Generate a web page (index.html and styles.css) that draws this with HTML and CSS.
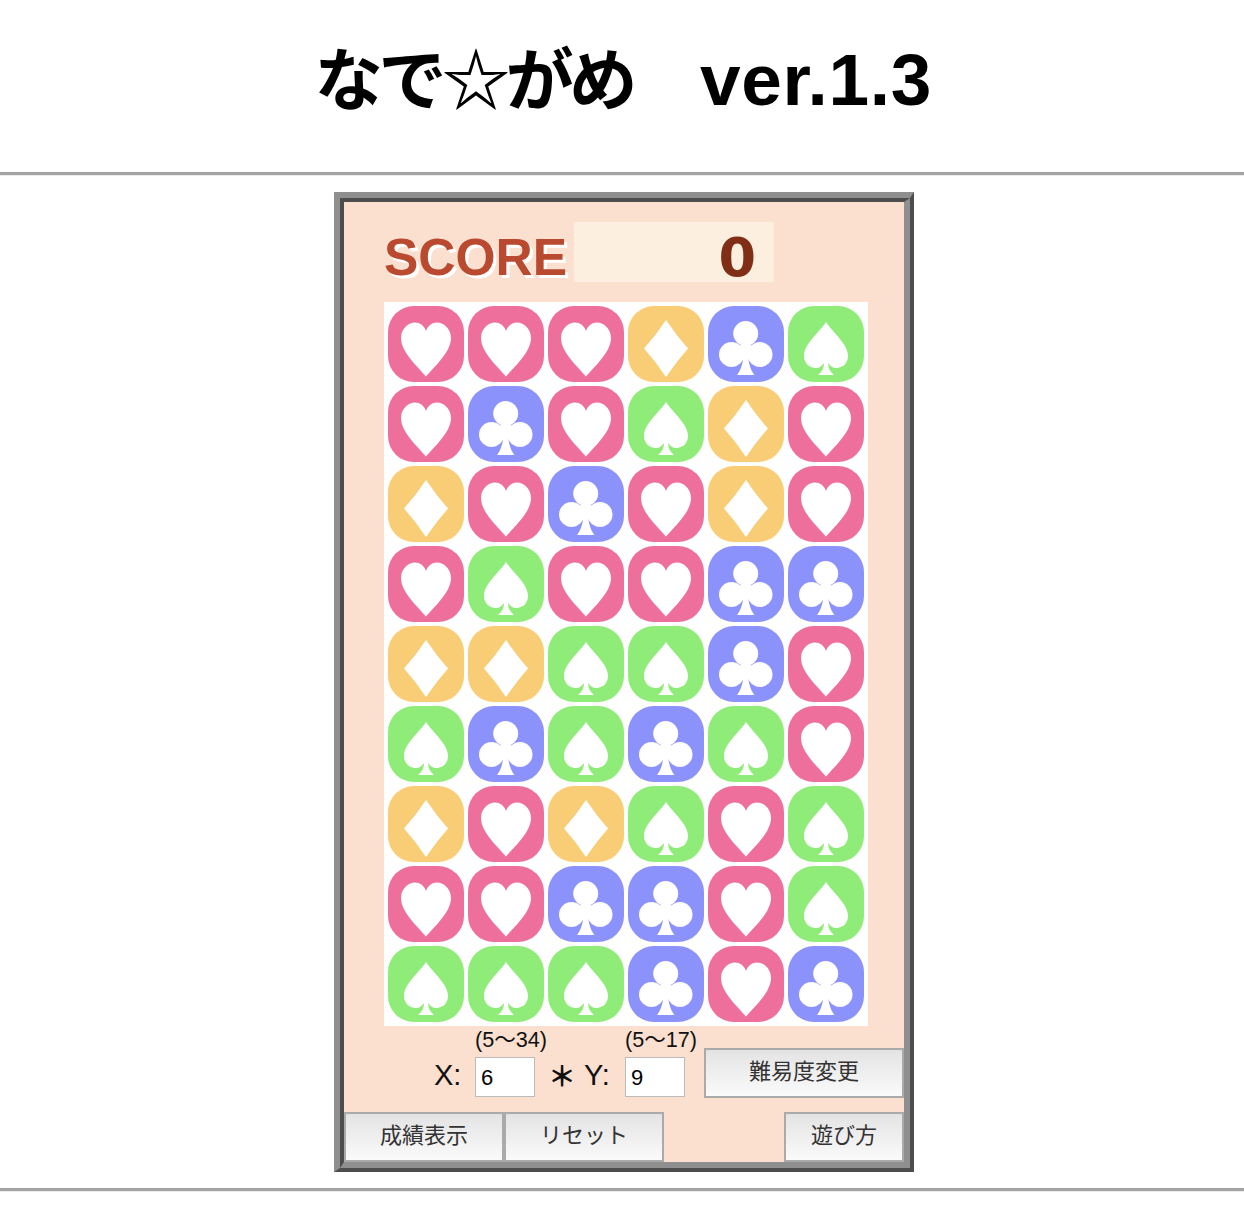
FILE: index.html
```html
<!DOCTYPE html>
<html lang="ja">
<head>
    <meta charset="utf-8"/>
    <title>なで☆がめ</title>
    <link rel="stylesheet" href="styles.css">
</head>

<body>
<svg class="defs" width="0" height="0">
    <symbol id="heart" viewBox="0 0 76 76">
        <path d="M38 70.500C29 60 13 46 13 32C13 23 20 16.500 27 16.500C32 16.500 36 19.500 38 25C40 19.500 44 16.500 49 16.500C56 16.500 63 23 63 32C63 46 47 60 38 70.500Z"/>
    </symbol>
    <symbol id="diamond" viewBox="0 0 76 76">
        <path d="M38 14Q48 29 60 42.500Q48 56 38 71Q28 56 16 42.500Q28 29 38 14Z"/>
    </symbol>
    <symbol id="club" viewBox="0 0 76 76">
        <circle cx="37.700" cy="27.500" r="12.500"/>
        <circle cx="23.500" cy="48.500" r="12.500"/>
        <circle cx="52" cy="48.500" r="12.500"/>
        <path d="M37.700 32L29 44L33 52H42.500L46.500 44Z"/>
        <path d="M35.500 44H40C40 54 41.500 63 46.500 69H29C34 63 35.500 54 35.500 44Z"/>
    </symbol>
    <symbol id="spade" viewBox="0 0 76 76">
        <path d="M38 16C29 29 16 38 16 50C16 57 21 62 28 62C31 62 34 60 36 57C36 62 34 66 30 69H46C42 66 40 62 40 57C42 60 45 62 48 62C55 62 60 57 60 50C60 38 47 29 38 16Z"/>
    </symbol>
</svg>

<h1 class="title"><span class="title_jp">なで☆がめ</span><span class="title_gap">　</span>ver.1.3</h1>
<hr class="rule"/>

<div class="game">
    <div class="game_inner">
        <div class="score">
            <div class="score_label">SCORE</div>
            <div class="score_value">0</div>
        </div>

        <div class="board">
            <div class="tile pink"><svg><use href="#heart"/></svg></div>
            <div class="tile pink"><svg><use href="#heart"/></svg></div>
            <div class="tile pink"><svg><use href="#heart"/></svg></div>
            <div class="tile orange"><svg><use href="#diamond"/></svg></div>
            <div class="tile blue"><svg><use href="#club"/></svg></div>
            <div class="tile green"><svg><use href="#spade"/></svg></div>

            <div class="tile pink"><svg><use href="#heart"/></svg></div>
            <div class="tile blue"><svg><use href="#club"/></svg></div>
            <div class="tile pink"><svg><use href="#heart"/></svg></div>
            <div class="tile green"><svg><use href="#spade"/></svg></div>
            <div class="tile orange"><svg><use href="#diamond"/></svg></div>
            <div class="tile pink"><svg><use href="#heart"/></svg></div>

            <div class="tile orange"><svg><use href="#diamond"/></svg></div>
            <div class="tile pink"><svg><use href="#heart"/></svg></div>
            <div class="tile blue"><svg><use href="#club"/></svg></div>
            <div class="tile pink"><svg><use href="#heart"/></svg></div>
            <div class="tile orange"><svg><use href="#diamond"/></svg></div>
            <div class="tile pink"><svg><use href="#heart"/></svg></div>

            <div class="tile pink"><svg><use href="#heart"/></svg></div>
            <div class="tile green"><svg><use href="#spade"/></svg></div>
            <div class="tile pink"><svg><use href="#heart"/></svg></div>
            <div class="tile pink"><svg><use href="#heart"/></svg></div>
            <div class="tile blue"><svg><use href="#club"/></svg></div>
            <div class="tile blue"><svg><use href="#club"/></svg></div>

            <div class="tile orange"><svg><use href="#diamond"/></svg></div>
            <div class="tile orange"><svg><use href="#diamond"/></svg></div>
            <div class="tile green"><svg><use href="#spade"/></svg></div>
            <div class="tile green"><svg><use href="#spade"/></svg></div>
            <div class="tile blue"><svg><use href="#club"/></svg></div>
            <div class="tile pink"><svg><use href="#heart"/></svg></div>

            <div class="tile green"><svg><use href="#spade"/></svg></div>
            <div class="tile blue"><svg><use href="#club"/></svg></div>
            <div class="tile green"><svg><use href="#spade"/></svg></div>
            <div class="tile blue"><svg><use href="#club"/></svg></div>
            <div class="tile green"><svg><use href="#spade"/></svg></div>
            <div class="tile pink"><svg><use href="#heart"/></svg></div>

            <div class="tile orange"><svg><use href="#diamond"/></svg></div>
            <div class="tile pink"><svg><use href="#heart"/></svg></div>
            <div class="tile orange"><svg><use href="#diamond"/></svg></div>
            <div class="tile green"><svg><use href="#spade"/></svg></div>
            <div class="tile pink"><svg><use href="#heart"/></svg></div>
            <div class="tile green"><svg><use href="#spade"/></svg></div>

            <div class="tile pink"><svg><use href="#heart"/></svg></div>
            <div class="tile pink"><svg><use href="#heart"/></svg></div>
            <div class="tile blue"><svg><use href="#club"/></svg></div>
            <div class="tile blue"><svg><use href="#club"/></svg></div>
            <div class="tile pink"><svg><use href="#heart"/></svg></div>
            <div class="tile green"><svg><use href="#spade"/></svg></div>

            <div class="tile green"><svg><use href="#spade"/></svg></div>
            <div class="tile green"><svg><use href="#spade"/></svg></div>
            <div class="tile green"><svg><use href="#spade"/></svg></div>
            <div class="tile blue"><svg><use href="#club"/></svg></div>
            <div class="tile pink"><svg><use href="#heart"/></svg></div>
            <div class="tile blue"><svg><use href="#club"/></svg></div>
        </div>

        <div class="setting">
            <span class="axis">X:</span>
            <div class="field">
                <span class="hint">(5〜34)</span>
                <input class="size_input" type="text" value="6"/>
            </div>
            <span class="times">＊</span>
            <span class="axis">Y:</span>
            <div class="field">
                <span class="hint">(5〜17)</span>
                <input class="size_input" type="text" value="9"/>
            </div>
            <button class="btn btn_level">難易度変更</button>
        </div>

        <div class="menu">
            <button class="btn btn_wide">成績表示</button>
            <button class="btn btn_wide">リセット</button>
            <button class="btn btn_help">遊び方</button>
        </div>
    </div>
</div>

<hr class="rule rule_bottom"/>
</body>
</html>
```

FILE: styles.css
```css
*{ padding:0px; margin:0px; box-sizing:border-box; }
body{ background:#fff; color:#000; font-family:"Liberation Sans","Noto Sans CJK JP",sans-serif; }
.defs{ position:absolute; }

.title{ height:172px; padding:38px 0 0 3px; text-align:center; font-size:73px; line-height:84px; font-weight:bold; letter-spacing:.7px; white-space:nowrap; }
.title_jp{ font-size:68px; letter-spacing:-4.400px; }
.title_gap{ font-size:67px; letter-spacing:0; }
.rule{ border:0; border-top:3px solid #a3a3a3; border-bottom:1px solid #ececec; height:4px; }
.rule_bottom{ margin-top:16px; }

.game{ width:580px; height:980px; margin:16px 0 0 334px; border-style:solid; border-width:6px 4px 4px 6px; border-color:#8f8f8f #4d4d4d #4d4d4d #8f8f8f; }
.game_inner{ height:100%; border-style:solid; border-width:4px 6px 6px 4px; border-color:#4d4d4d #8f8f8f #8f8f8f #4d4d4d; background:#fbdfcf; }

.score{ display:flex; padding:20px 0 0 40px; height:80px; }
.score_label{ width:190px; font-size:51.500px; line-height:71px; font-weight:bold; color:#b94a30; text-shadow:3px 3px 0 #fff; }
.score_value{ width:200px; height:60px; padding-right:18px; background:#fcefe0; text-align:right; font-family:"DejaVu Sans",sans-serif; font-size:54px; line-height:72px; font-weight:bold; color:#812e16; }

.board{ display:grid; grid-template-columns:repeat(6,76px); gap:4px; width:484px; height:724px; margin:20px 0 0 40px; padding:4px; background:#fff; }
.tile{ width:76px; height:76px; border-radius:26px; }
.tile svg{ display:block; width:76px; height:76px; fill:#fff; }
.pink{ background:#ee6f9b; }
.blue{ background:#8c92fb; }
.orange{ background:#f9cd75; }
.green{ background:#8fec78; }

.setting{ display:flex; align-items:flex-end; height:72px; padding-left:90px; }
.axis{ width:27px; margin:0 14px 3px 0; font-size:29px; line-height:40px; color:#111; }
.times{ width:36px; margin:0 0 0 13px; font-size:28px; line-height:40px; font-weight:bold; color:#111; }
.field{ display:flex; flex-direction:column; width:60px; margin-bottom:1px; }
.hint{ height:30px; font-size:21.600px; line-height:26px; white-space:nowrap; color:#111; }
.size_input{ width:60px; height:40px; padding:2px 0 0 5px; border:1px solid #bbb; background:#fff; font-family:inherit; font-size:22px; color:#000; }

.btn{ height:50px; border:2px solid #aaa; border-radius:0; background:linear-gradient(#e3e3e3,#fafafa); font-family:inherit; font-size:22px; color:#333; padding-bottom:8px; }
.btn_level{ width:200px; margin-left:19px; }
.btn_wide{ width:160px; }
.btn_help{ width:120px; margin-left:auto; }
.menu{ display:flex; margin-top:14px; }
```
